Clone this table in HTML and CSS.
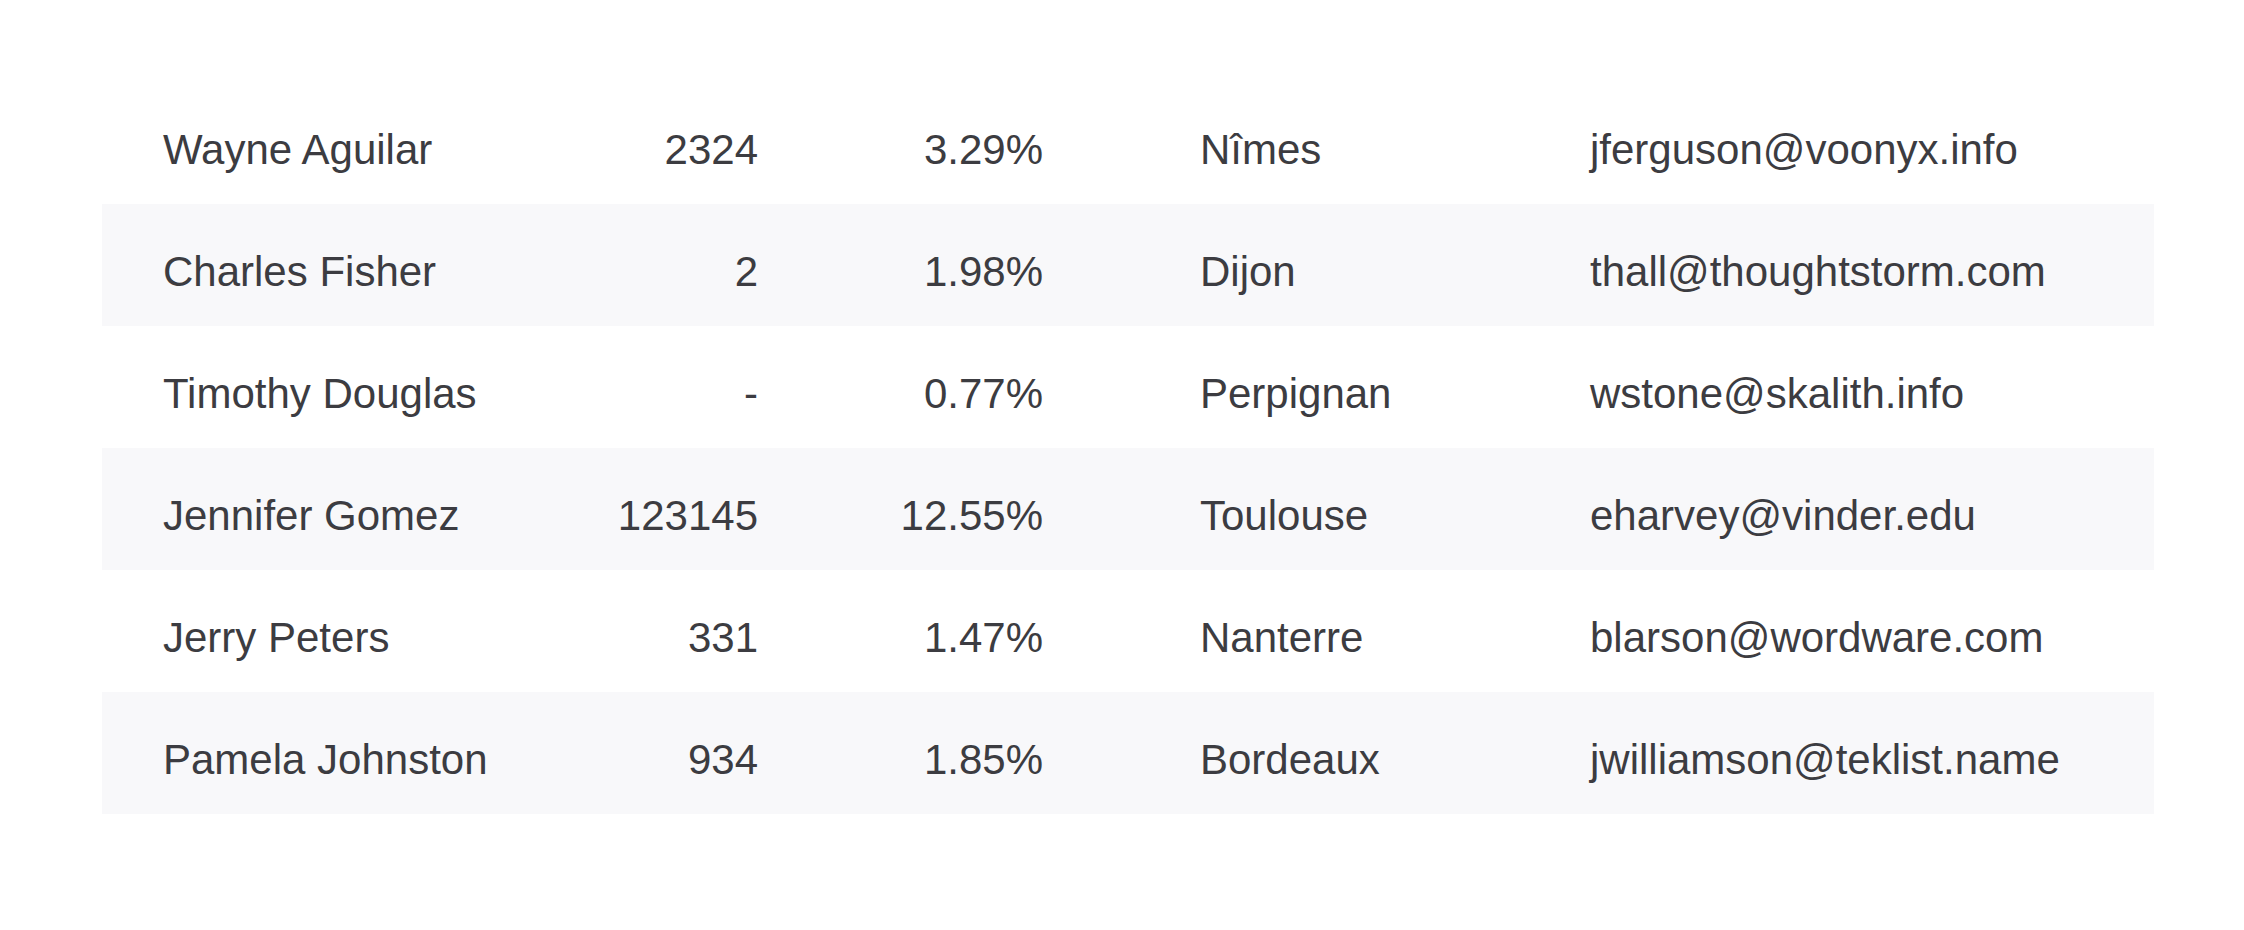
FILE: index.html
```html
<!DOCTYPE html>
<html lang="en">
<head>
<meta charset="utf-8">
<title>Table</title>
<link rel="stylesheet" href="styles.css">
</head>
<body>
<main class="page">
  <table class="data-table">
    <colgroup>
      <col class="c-name">
      <col class="c-num">
      <col class="c-pct">
      <col class="c-city">
      <col class="c-email">
    </colgroup>
    <tbody>
      <tr><td class="name">Wayne Aguilar</td><td class="num">2324</td><td class="pct">3.29%</td><td class="city">Nîmes</td><td class="email">jferguson@voonyx.info</td></tr>
      <tr><td class="name">Charles Fisher</td><td class="num">2</td><td class="pct">1.98%</td><td class="city">Dijon</td><td class="email">thall@thoughtstorm.com</td></tr>
      <tr><td class="name">Timothy Douglas</td><td class="num">-</td><td class="pct">0.77%</td><td class="city">Perpignan</td><td class="email">wstone@skalith.info</td></tr>
      <tr><td class="name">Jennifer Gomez</td><td class="num">123145</td><td class="pct">12.55%</td><td class="city">Toulouse</td><td class="email">eharvey@vinder.edu</td></tr>
      <tr><td class="name">Jerry Peters</td><td class="num">331</td><td class="pct">1.47%</td><td class="city">Nanterre</td><td class="email">blarson@wordware.com</td></tr>
      <tr><td class="name">Pamela Johnston</td><td class="num">934</td><td class="pct">1.85%</td><td class="city">Bordeaux</td><td class="email">jwilliamson@teklist.name</td></tr>
    </tbody>
  </table>
</main>
</body>
</html>
```
FILE: styles.css
```css
html, body {
  margin: 0;
  padding: 0;
  background: #ffffff;
}

.page {
  padding: 82px 90px 0 102px;
  font-family: "Liberation Sans", Arial, Helvetica, sans-serif;
  color: #3c3c41;
}

.data-table {
  width: 2052px;
  border-collapse: collapse;
  table-layout: fixed;
  font-size: 42px;
  line-height: 48px;
}

.c-name { width: 438px; }
.c-num { width: 278px; }
.c-pct { width: 321px; }
.c-city { width: 390px; }
.c-email { width: 625px; }

.data-table td {
  padding: 44px 0 30px 0;
  white-space: nowrap;
  vertical-align: top;
}

.data-table tr:nth-child(even) td {
  background: #f8f8fa;
}

.name { padding-left: 61px !important; text-align: left; }
.num { text-align: right; padding-right: 60px !important; }
.pct { text-align: right; padding-right: 96px !important; }
.city { padding-left: 61px !important; text-align: left; }
.email { padding-left: 61px !important; text-align: left; }
```
